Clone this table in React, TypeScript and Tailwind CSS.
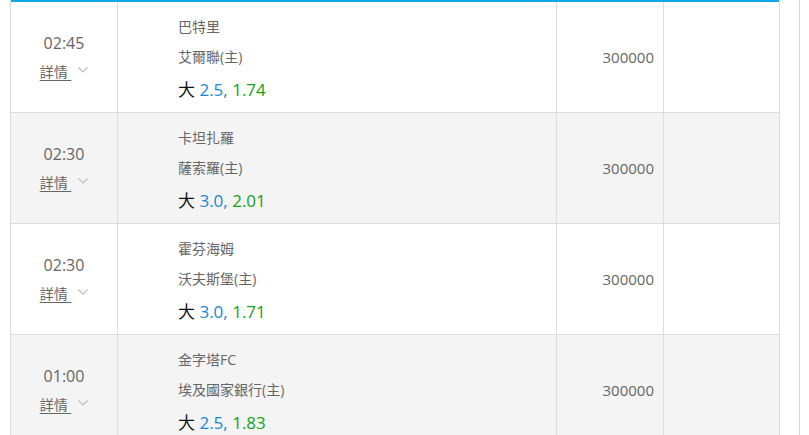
import React from "react";

type Row = { time: string; away: string; home: string; line: string; odds: string; amount: string };

const rows: Row[] = [
  { time: "02:45", away: "巴特里", home: "艾爾聯(主)", line: "2.5", odds: "1.74", amount: "300000" },
  { time: "02:30", away: "卡坦扎羅", home: "薩索羅(主)", line: "3.0", odds: "2.01", amount: "300000" },
  { time: "02:30", away: "霍芬海姆", home: "沃夫斯堡(主)", line: "3.0", odds: "1.71", amount: "300000" },
  { time: "01:00", away: "金字塔FC", home: "埃及國家銀行(主)", line: "2.5", odds: "1.83", amount: "300000" },
];

function Chevron() {
  return (
    <svg width="10" height="6" viewBox="0 0 10 6" className="ml-[7px] mt-[-4px]">
      <path d="M0.5 0.5 L5 5 L9.5 0.5" fill="none" stroke="#bdbdbd" strokeWidth="1.1" />
    </svg>
  );
}

export default function App() {
  return (
    <div
      className="flex h-[435px] w-[809px] overflow-hidden bg-white"
      style={{ fontFamily: "'Open Sans', 'Noto Sans CJK TC', sans-serif" }}
    >
      <div className="ml-[10px] w-[770px] shrink-0 border-l border-r border-[#dddddd]">
        <div className="h-[2px] bg-[#0fa8ea]" />
        {rows.map((r, i) => (
          <div
            key={i}
            className={`flex h-[111px] border-b border-[#dddddd] ${i % 2 === 1 ? "bg-[#f4f4f4]" : "bg-white"}`}
          >
            <div className="flex w-[107px] shrink-0 flex-col items-center border-r border-[#dddddd] pt-[31px] text-[#666666]">
              <div className="text-[16px] leading-[20px]">{r.time}</div>
              <div className="mt-[9px] flex items-center text-[14px] leading-[20px]">
                <span className="underline decoration-[#666666] underline-offset-[3px]">詳情&nbsp;</span>
                <Chevron />
              </div>
            </div>
            <div className="flex w-[439px] shrink-0 flex-col border-r border-[#dddddd] pl-[60px] pt-[10px]">
              <div className="h-[30px] text-[14px] leading-[30px] text-[#666666]">{r.away}</div>
              <div className="h-[30px] text-[14px] leading-[30px] text-[#666666]">{r.home}</div>
              <div className="h-[36px] text-[17px] leading-[36px]">
                <span className="text-[#111111]">大 </span>
                <span className="text-[#1a88d4]">{r.line}, </span>
                <span className="text-[#17a01a]">{r.odds}</span>
              </div>
            </div>
            <div className="flex w-[107px] shrink-0 items-center justify-end border-r border-[#dddddd] pr-[9px] text-[15px] text-[#666666]">
              {r.amount}
            </div>
            <div className="flex-1" />
          </div>
        ))}
      </div>
      <div className="ml-[19px] h-full border-l border-[#d6d6d6]" />
    </div>
  );
}
